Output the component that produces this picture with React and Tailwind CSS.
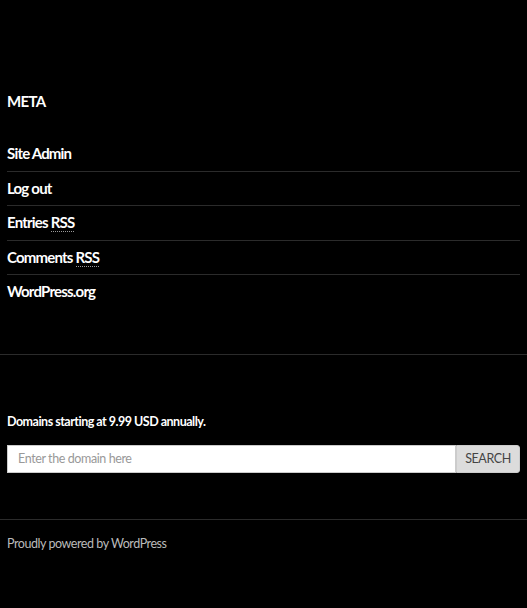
export default function App() {
  const items = ["Site Admin", "Log out", "Entries RSS", "Comments RSS", "WordPress.org"];
  return (
    <div className="w-[527px] h-[608px] bg-black text-white overflow-hidden" style={{ fontFamily: "Lato, 'Noto Sans', sans-serif" }}>
      <div className="px-[7px] pt-[91px]">
        <h2 className="text-[15px] leading-[21.3px] font-bold text-white tracking-[-0.7px]">META</h2>
        <ul className="mt-[25px] w-[513px]">
          {items.map((it, i) => (
            <li
              key={it}
              className={
                "text-[15px] leading-[21.3px] font-bold tracking-[-0.8px] pt-[6px] pb-[6.2px] " +
                (i < items.length - 1 ? "border-b border-[#2b2b2b]" : "")
              }
            >
              {it.endsWith("RSS") ? (
                <>
                  {it.replace("RSS", "")}
                  <abbr className="no-underline border-b border-dotted border-[#999]" style={{ textDecoration: "none" }}>RSS</abbr>
                </>
              ) : (
                it
              )}
            </li>
          ))}
        </ul>
      </div>
      <div className="mt-[45px] border-t border-[#2b2b2b]" />
      <div className="px-[7px] pt-[58px]">
        <p className="text-[12.5px] leading-[18px] font-bold tracking-[-0.5px]">Domains starting at 9.99 USD annually.</p>
        <div className="mt-[14px] flex w-[513px] h-[28px]">
          <div className="flex-1 bg-white border border-[#ccc] flex items-center pl-[10px] pt-[2px] text-[12.5px] tracking-[-0.4px] text-[#999]">
            Enter the domain here
          </div>
          <div className="w-[64px] bg-[#dcdcdc] border border-[#ccc] rounded-r-[3px] flex items-center justify-center pt-[2px] text-[12.5px] tracking-[-0.4px] text-[#444]">
            SEARCH
          </div>
        </div>
      </div>
      <div className="mt-[46px] border-t border-[#2b2b2b]" />
      <div className="px-[7px] pt-[15px]">
        <p className="text-[12.5px] leading-[18px] tracking-[-0.45px] text-[#bbb]">Proudly powered by WordPress</p>
      </div>
    </div>
  );
}
